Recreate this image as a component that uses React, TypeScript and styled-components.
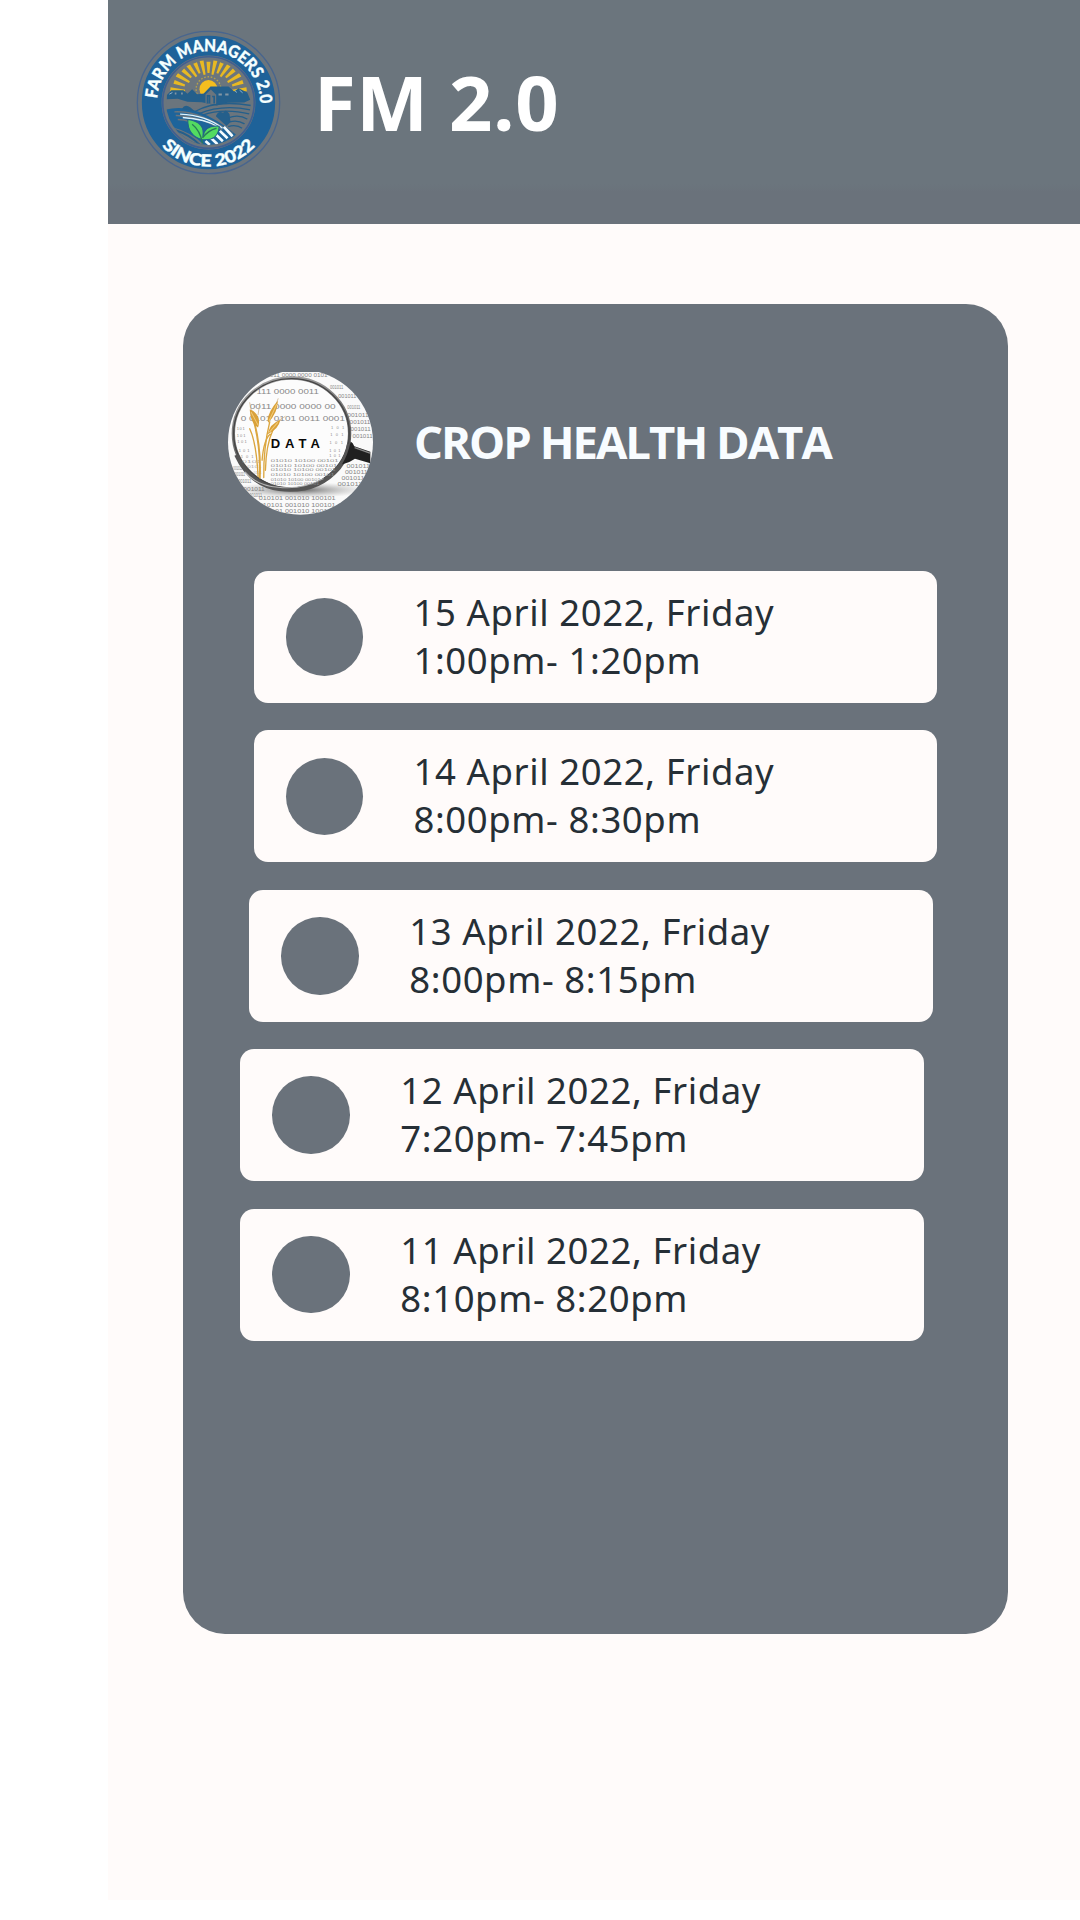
import React from "react";
import styled, { createGlobalStyle } from "styled-components";

const GlobalStyle = createGlobalStyle`
  *, *::before, *::after { box-sizing: border-box; }
  html, body { margin: 0; padding: 0; background: #ffffff; }
  body { font-family: "Noto Sans", "Open Sans", sans-serif; }
`;

const Screen = styled.div`
  width: 1080px;
  height: 1920px;
  padding: 0 0 20px 108px;
  background: #ffffff;
  overflow: hidden;
`;

const Page = styled.div`
  display: flex;
  flex-direction: column;
  height: 1900px;
  background: #fffbfa;
`;

const Header = styled.header`
  display: flex;
  align-items: flex-start;
  height: 224px;
  padding: 30px 0 0 28px;
  background: linear-gradient(#6b757d 0, #6b757d 184px, #6a727b 192px);
`;

const LogoArt = styled.svg`
  display: block;
  flex: none;
  width: 145px;
  height: 145px;
`;

const Brand = styled.h1`
  margin: 19px 0 0 33px;
  color: #fff;
  font-family: "Open Sans", "Noto Sans", sans-serif;
  font-size: 76px;
  line-height: 106px;
  font-weight: 700;
  letter-spacing: 0.6px;
  white-space: nowrap;
`;

const Panel = styled.main`
  display: flex;
  flex-direction: column;
  width: 825px;
  height: 1330px;
  margin: 80px 0 0 75px;
  padding-top: 68px;
  border-radius: 42px;
  background: #6a727b;
`;

const PanelHeader = styled.div`
  display: flex;
  align-items: flex-start;
  height: 143px;
  margin: 0 0 56px 45px;
`;

const DataArt = styled.svg`
  display: block;
  flex: none;
  width: 145px;
  height: 143px;
`;

const PanelTitle = styled.h2`
  margin: 39px 0 0 41px;
  color: #f8fcff;
  font-family: "Open Sans", "Noto Sans", sans-serif;
  font-size: 45.5px;
  line-height: 60px;
  font-weight: 700;
  letter-spacing: -2px;
  white-space: nowrap;
`;

const Entries = styled.ul`
  display: flex;
  flex-direction: column;
  gap: 27.4px;
  margin: 0;
  padding: 0;
  list-style: none;
`;

const Entry = styled.li<{ $indent: number }>`
  display: flex;
  align-items: center;
  width: 683.5px;
  height: 132px;
  margin-left: ${(p) => p.$indent}px;
  padding-left: 32px;
  border-radius: 14px;
  background: #fffbfa;
`;

const Dot = styled.span`
  flex: none;
  width: 77.5px;
  height: 77.5px;
  border-radius: 50%;
  background: #6a727b;
`;

const EntryText = styled.div`
  display: flex;
  flex-direction: column;
  margin-left: 50.5px;
  padding-bottom: 2px;
  color: #262f36;
  font-size: 36.5px;
  line-height: 48px;
  letter-spacing: 0.6px;
  white-space: nowrap;
`;

const rows = [
  { date: "15 April 2022, Friday", time: "1:00pm- 1:20pm", indent: 70.5 },
  { date: "14 April 2022, Friday", time: "8:00pm- 8:30pm", indent: 70.5 },
  { date: "13 April 2022, Friday", time: "8:00pm- 8:15pm", indent: 66.3 },
  { date: "12 April 2022, Friday", time: "7:20pm- 7:45pm", indent: 57.3 },
  { date: "11 April 2022, Friday", time: "8:10pm- 8:20pm", indent: 57.3 },
];

const rays = Array.from({ length: 15 }, (_, i) => -84 + i * 12);

function Logo() {
  return (
    <LogoArt viewBox="48 31 434 434" aria-label="Farm Managers 2.0">
      <defs>
        <path id="ring-top" d="M 111 249 A 154 154 0 0 1 419 249" />
        <path id="ring-bottom" d="M 74 249 A 191 191 0 0 0 456 249" />
        <clipPath id="scene">
          <circle cx="265" cy="248" r="127" />
        </clipPath>
      </defs>
      <circle cx="265" cy="248" r="213" fill="none" stroke="#48658e" strokeWidth="4" />
      <circle cx="265" cy="248" r="170" fill="none" stroke="#1e6299" strokeWidth="59" />
      <circle cx="265" cy="248" r="137" fill="none" stroke="#405f91" strokeWidth="5" />
      <g clipPath="url(#scene)">
        {rays.map((a, i) => (
          <polygon
            key={a}
            points={i % 2 ? "262,160 268,160 271,126 259,126" : "262,166 268,166 271,122 259,122"}
            fill="#e8b923"
            transform={`rotate(${a} 265 220) translate(0 ${-Math.abs(a) * 0.2})`}
          />
        ))}
        <circle cx="265" cy="208" r="37" fill="none" stroke="#b5a04b" strokeWidth="4" strokeDasharray="5 5" />
        <circle cx="265" cy="208" r="27" fill="#f3bd1e" />
        <path d="M138 222 H392 V266 H138Z" fill="#6b757d" />
        <path d="M140 226 L154 211 L190 211 L202 222 L216 208 L231 223 L250 222 L271 200 L325 200 L342 215 L355 205 L381 218 L390 240 L372 248 L322 249 L290 257 L245 247 L202 246 L173 237 L140 238Z" fill="#245f8b" />
        <path d="M256 251 V224 L272 209 L288 225 V253Z" fill="#6b757d" />
        <path d="M262 251 V228 H268 V251M276 230 H282 V251 M293 224 H306 M315 224 H328 M162 222 H172 M181 222 H190" stroke="#245f8b" strokeWidth="5" fill="none" />
        <path d="M164 221 h5 M183 221 h5 M295 224 h10 M315 224 h10" stroke="#8396a4" strokeWidth="6" />
        <path d="M344 213 l6 5 M358 211 l9 8 M148 223 l9 -5" stroke="#c6dfee" strokeWidth="2" />
        <path d="M138 269 Q185 257 235 276 Q291 298 347 344 L327 387 L177 370 L137 307Z" fill="#1d649b" />
        <path d="M186 268 Q194 251 211 263 Q217 268 224 274Z M287 289 Q294 270 309 279 Q316 264 328 283 L331 306 L319 318Z" fill="#245f8b" />
        <path d="M225 275 Q287 239 393 257 M235 282 Q305 252 390 270 M247 286 Q309 263 390 283 M324 294 Q355 282 382 298 M328 306 Q352 299 373 312 M324 320 Q348 312 367 326" fill="none" stroke="#245f8b" strokeWidth="4" />
        <path d="M163 276 Q239 272 337 341 M167 287 Q236 286 306 330 M173 299 Q210 300 241 320" fill="none" stroke="#6b757d" strokeWidth="4" />
        <path d="M180 283 Q257 286 307 325 M188 293 Q257 298 290 319" fill="none" stroke="#ddf4ff" strokeWidth="4" />
        <path d="M160 323 Q211 336 253 375 L220 380 Q190 370 160 340Z" fill="#6b757d" />
        <path d="M166 331 Q208 344 238 374" stroke="#245f8b" strokeWidth="6" fill="none" />
        <path d="M256 363 l13 12 M270 352 l22 21 M286 343 l22 21 M299 333 l23 22 M311 321 l26 28" fill="none" stroke="#f3fcff" strokeWidth="8" />
      </g>
      <path d="M246 359 Q202 348 203 299 Q257 306 248 351 Q253 315 297 319 Q294 364 246 359Z" fill="#53db61" stroke="#24618b" strokeWidth="3" />
      <path d="M216 313 Q240 331 247 370 M247 354 Q264 331 289 325" fill="none" stroke="#287b58" strokeWidth="4" />
      <g fill="#f5ffff" fontFamily="Lato, sans-serif" fontWeight="900" stroke="#f5ffff" strokeWidth="1">
        <text fontSize="51">
          <textPath href="#ring-top" startOffset="12" textLength="474" lengthAdjust="spacingAndGlyphs">FARM MANAGERS 2.0</textPath>
        </text>
        <text fontSize="50">
          <textPath href="#ring-bottom" startOffset="142" textLength="316" lengthAdjust="spacingAndGlyphs">SINCE 2022</textPath>
        </text>
      </g>
    </LogoArt>
  );
}

const digits = [
  { x: 165, y: 54, s: 17, t: "011 0000 0000 0101", w: 173 },
  { x: 125, y: 105, s: 24, t: "111 0000 0011", w: 187 },
  { x: 105, y: 149, s: 23, t: "0011 0000 0000 00", w: 257 },
  { x: 78, y: 184, s: 20, t: "0 0101 0101 0011 0001", w: 312 },
];

const smallRows = [
  [345, 89, 40], [370, 116, 54], [397, 148, 39], [397, 174, 64], [404, 193, 62], [407, 215, 60],
  [413, 237, 60],
  [395, 324, 70], [390, 342, 68], [380, 361, 68], [368, 379, 74],
  [56, 330, 27], [61, 350, 30], [70, 369, 40], [86, 393, 64], [104, 412, 38],
];

const lensRows = [
  [348, 210, 40], [346, 231, 40], [344, 254, 40], [343, 276, 34], [343, 292, 34],
  [66, 213, 24], [66, 232, 26], [68, 252, 28], [72, 276, 32], [78, 295, 38],
];

function DataBadge() {
  return (
    <DataArt viewBox="40 38 434 428" aria-label="Data under a magnifying glass">
      <defs>
        <clipPath id="badge">
          <ellipse cx="257" cy="248" rx="217" ry="217" />
        </clipPath>
        <linearGradient id="rim" x1="0" y1="0" x2="0.3" y2="1">
          <stop offset="0" stopColor="#aaa" />
          <stop offset="0.5" stopColor="#777" />
          <stop offset="1" stopColor="#444" />
        </linearGradient>
        <radialGradient id="shade">
          <stop offset="0" stopColor="#555" stopOpacity="0.9" />
          <stop offset="1" stopColor="#aaa" stopOpacity="0" />
        </radialGradient>
      </defs>
      <g clipPath="url(#badge)">
        <rect x="40" y="32" width="434" height="440" fill="#fafafa" />
        <ellipse cx="255" cy="391" rx="207" ry="24" fill="url(#shade)" />
        <g fontFamily="Liberation Sans, sans-serif" fontSize="14" fill="#858585">
          {smallRows.map(([x, y, w]) => (
            <text key={`${x}-${y}`} x={x} y={y} textLength={w} lengthAdjust="spacingAndGlyphs">001011</text>
          ))}
          {[420, 441, 461].map((y) => (
            <text key={y} x="132" y={y} textLength="230" lengthAdjust="spacingAndGlyphs">010101 001010 100101</text>
          ))}
        </g>
        <ellipse cx="230" cy="222" rx="174" ry="166" fill="#fcfcfc" stroke="url(#rim)" strokeWidth="10" />
        <ellipse cx="230" cy="222" rx="173" ry="164" fill="none" stroke="#454545" strokeWidth="4" />
        <path d="M65 286 Q106 376 193 388 Q306 402 373 323 Q397 292 403 253" fill="none" stroke="#555" strokeWidth="13" />
        <path d="M91 337 Q126 379 190 383 Q262 391 326 357" fill="none" stroke="#b5b5b5" strokeWidth="3" />
        <path d="M407 246 Q414 250 418 260 L466 277 V311 L420 298 Q404 310 381 315 Q399 286 407 246Z" fill="#202020" />
        <path d="M419 264 L465 281" stroke="#888" strokeWidth="4" />
        <g fontFamily="Liberation Sans, sans-serif" fill="#888">
          {digits.map((d) => (
            <text key={d.y} x={d.x} y={d.y} fontSize={d.s} textLength={d.w} lengthAdjust="spacingAndGlyphs">{d.t}</text>
          ))}
        </g>
        <g fontFamily="Liberation Sans, sans-serif" fontSize="12" fill="#8c8c8c">
          {lensRows.map(([x, y, w]) => (
            <text key={`${x}-${y}`} x={x} y={y} textLength={w}>101</text>
          ))}
          {[307, 321, 335, 349, 364, 376].map((y, i) => (
            <text key={y} x="168" y={y} textLength={i < 4 ? 203 - i * 4 : 165 - i * 4} lengthAdjust="spacingAndGlyphs">01010 10100 00101</text>
          ))}
          {[309, 325, 343].map((y) => (
            <text key={y} x={y - 227} y={y} textLength={60 - (y - 307)} lengthAdjust="spacingAndGlyphs" opacity="0.7">0101</text>
          ))}
        </g>
        <g fill="none" stroke="#dba640" strokeLinecap="round">
          <path d="M135 354 Q139 270 119 190" strokeWidth="6" />
          <path d="M147 354 Q146 264 165 187" strokeWidth="4" />
          <path d="M130 350 Q125 250 105 208 M152 332 Q154 255 174 213 M142 302 Q147 240 166 224" strokeWidth="4" />
          <path d="M130 166 L135 132 M176 154 L190 118 M187 186 L211 171 M110 155 L105 130" strokeWidth="2" stroke="#c6a87c" />
        </g>
        <path d="M130 204 Q107 191 105 150 Q119 152 130 172 Q136 186 130 204Z M160 190 Q154 164 189 124 Q190 158 160 190Z M159 224 Q164 194 197 181 Q191 210 159 224Z" fill="#d9a13a" />
        <path d="M109 158 L130 197 M186 134 L163 184 M189 189 L164 218" stroke="#f1ca76" strokeWidth="3" />
        <text x="168" y="265" fontFamily="Liberation Sans, sans-serif" fontSize="39" fontWeight="700" fill="#080808" textLength="147">DATA</text>
      </g>
    </DataArt>
  );
}

export default function App() {
  return (
    <>
      <GlobalStyle />
      <Screen>
        <Page>
          <Header>
            <Logo />
            <Brand>FM 2.0</Brand>
          </Header>
          <Panel>
            <PanelHeader>
              <DataBadge />
              <PanelTitle>CROP HEALTH DATA</PanelTitle>
            </PanelHeader>
            <Entries>
              {rows.map((r) => (
                <Entry key={r.date} $indent={r.indent}>
                  <Dot />
                  <EntryText>
                    <span>{r.date}</span>
                    <span>{r.time}</span>
                  </EntryText>
                </Entry>
              ))}
            </Entries>
          </Panel>
        </Page>
      </Screen>
    </>
  );
}
